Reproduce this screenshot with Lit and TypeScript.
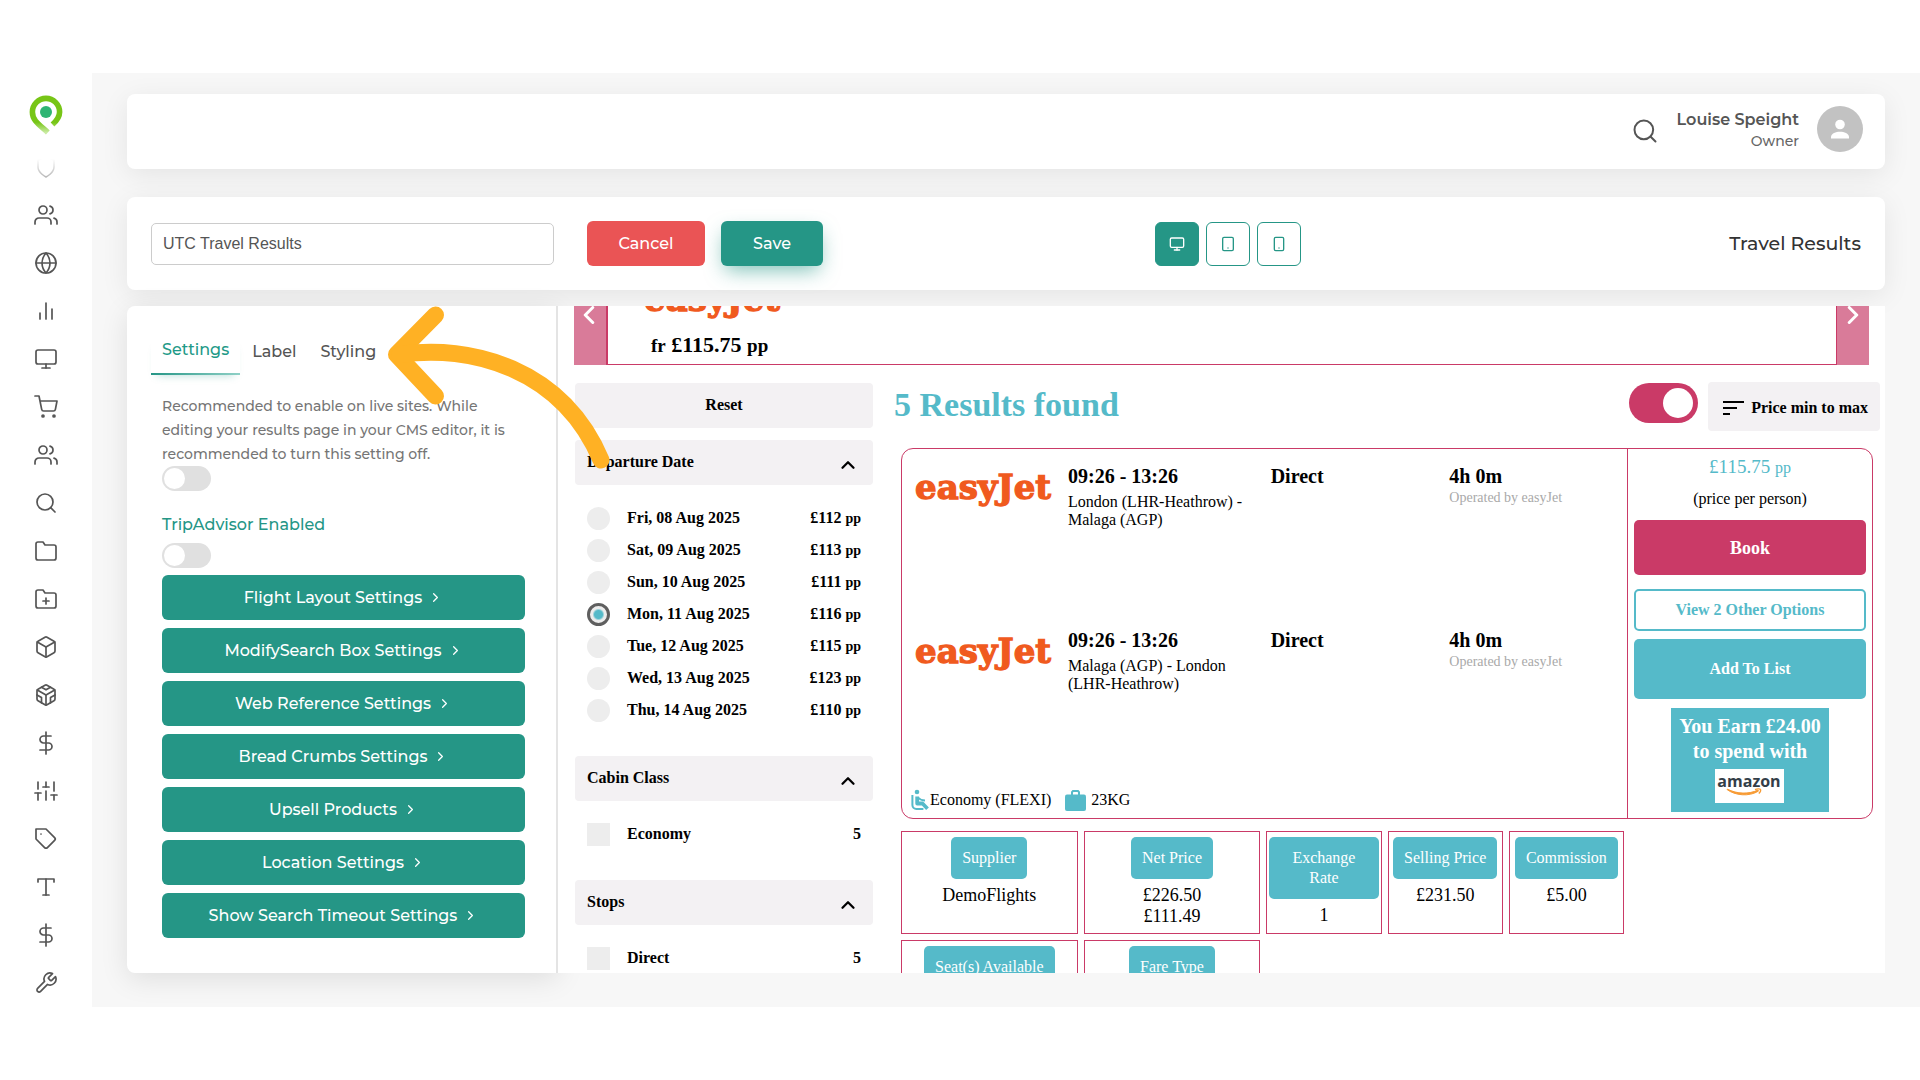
import { LitElement, html, css, svg } from "lit";
import { customElement, property, state } from "lit/decorators.js";
import { classMap } from "lit/directives/class-map.js";

/* Line icons, 24px grid, drawn with the current colour. */
const ICONS: Record<string, unknown> = {
  users: svg`<path d="M17 21v-2a4 4 0 0 0-4-4H5a4 4 0 0 0-4 4v2"/><circle cx="9" cy="7" r="4"/><path d="M23 21v-2a4 4 0 0 0-3-3.87"/><path d="M16 3.13a4 4 0 0 1 0 7.75"/>`,
  globe: svg`<circle cx="12" cy="12" r="10"/><path d="M2 12h20"/><path d="M12 2a15.3 15.3 0 0 1 4 10 15.3 15.3 0 0 1-4 10 15.3 15.3 0 0 1-4-10 15.3 15.3 0 0 1 4-10z"/>`,
  bars: svg`<path d="M18 20V10"/><path d="M12 20V4"/><path d="M6 20v-6"/>`,
  monitor: svg`<rect x="2" y="3" width="20" height="14" rx="2"/><path d="M8 21h8"/><path d="M12 17v4"/>`,
  cart: svg`<circle cx="9" cy="21" r="1"/><circle cx="20" cy="21" r="1"/><path d="M1 1h4l2.68 13.39a2 2 0 0 0 2 1.61h9.72a2 2 0 0 0 2-1.61L23 6H6"/>`,
  search: svg`<circle cx="11" cy="11" r="8"/><path d="M21 21l-4.35-4.35"/>`,
  folder: svg`<path d="M22 19a2 2 0 0 1-2 2H4a2 2 0 0 1-2-2V5a2 2 0 0 1 2-2h5l2 3h9a2 2 0 0 1 2 2z"/>`,
  folderPlus: svg`<path d="M22 19a2 2 0 0 1-2 2H4a2 2 0 0 1-2-2V5a2 2 0 0 1 2-2h5l2 3h9a2 2 0 0 1 2 2z"/><path d="M12 11v6"/><path d="M9 14h6"/>`,
  box: svg`<path d="M21 16V8a2 2 0 0 0-1-1.73l-7-4a2 2 0 0 0-2 0l-7 4A2 2 0 0 0 3 8v8a2 2 0 0 0 1 1.73l7 4a2 2 0 0 0 2 0l7-4A2 2 0 0 0 21 16z"/><path d="M3.27 6.96L12 12.01l8.73-5.05"/><path d="M12 22.08V12"/>`,
  sandbox: svg`<path d="M21 16V8a2 2 0 0 0-1-1.73l-7-4a2 2 0 0 0-2 0l-7 4A2 2 0 0 0 3 8v8a2 2 0 0 0 1 1.73l7 4a2 2 0 0 0 2 0l7-4A2 2 0 0 0 21 16z"/><path d="M7.5 4.21L12 6.81l4.5-2.6"/><path d="M7.5 19.79V14.6L3 12"/><path d="M21 12l-4.5 2.6v5.19"/><path d="M3.27 6.96L12 12.01l8.73-5.05"/><path d="M12 22.08V12"/>`,
  dollar: svg`<path d="M12 1v22"/><path d="M17 5H9.5a3.5 3.5 0 0 0 0 7h5a3.5 3.5 0 0 1 0 7H6"/>`,
  sliders: svg`<path d="M4 21v-7"/><path d="M4 10V3"/><path d="M12 21v-9"/><path d="M12 8V3"/><path d="M20 21v-5"/><path d="M20 12V3"/><path d="M1 14h6"/><path d="M9 8h6"/><path d="M17 16h6"/>`,
  tag: svg`<path d="M20.59 13.41l-7.17 7.17a2 2 0 0 1-2.83 0L2 12V2h10l8.59 8.59a2 2 0 0 1 0 2.82z"/><path d="M7 7h.01"/>`,
  type: svg`<path d="M4 7V4h16v3"/><path d="M9 20h6"/><path d="M12 4v16"/>`,
  wrench: svg`<path d="M14.7 6.3a1 1 0 0 0 0 1.4l1.6 1.6a1 1 0 0 0 1.4 0l3.77-3.77a6 6 0 0 1-7.94 7.94l-6.91 6.91a2.12 2.12 0 0 1-3-3l6.91-6.91a6 6 0 0 1 7.94-7.94l-3.76 3.76z"/>`,
  tablet: svg`<rect x="4" y="2" width="16" height="20" rx="2"/><path d="M12 18h.01"/>`,
  phone: svg`<rect x="5" y="2" width="14" height="20" rx="2"/><path d="M12 18h.01"/>`,
  left: svg`<path d="M15 18l-6-6 6-6"/>`,
  right: svg`<path d="M9 18l6-6-6-6"/>`,
  up: svg`<path d="M18 15l-6-6-6 6"/>`,
};

const icon = (name: string, size = 24, stroke = 1.5) => html`<svg
  class="icon"
  width=${size}
  height=${size}
  viewBox="0 0 24 24"
  fill="none"
  stroke="currentColor"
  stroke-width=${stroke}
  stroke-linecap="round"
  stroke-linejoin="round"
  aria-hidden="true"
>${ICONS[name]}</svg>`;

const airlineLogo = () => html`<svg class="airline" width="138" height="48" viewBox="0 0 138 48" role="img" aria-label="easyJet">
  <text x="0" y="35" font-family="'DejaVu Serif', serif" font-weight="700" font-size="34" fill="#f05a1e" stroke="#f05a1e" stroke-width="1.300">easyJet</text>
</svg>`;

const base = css`
  * { box-sizing: border-box; }
  button, input { font: inherit; color: inherit; margin: 0; }
  button { border: 0; background: none; padding: 0; cursor: pointer; }
  a { color: inherit; text-decoration: none; }
  p, h2, h3, dl, dd, dt, ul { margin: 0; padding: 0; font-weight: inherit; font-size: inherit; }
  ul { list-style: none; }
  svg { display: block; flex: none; }
`;

/* ---------- Navigation rail ---------- */

@customElement("nav-rail")
class NavRail extends LitElement {
  static styles = [base, css`
    :host {
      display: flex; flex-direction: column; align-items: center;
      width: 92px; flex: none; padding-top: 22px; background: #fff; color: #555;
      position: relative; z-index: 1; overflow: hidden;
    }
    .brand { height: 40px; margin-bottom: 20px; }
    .shield { margin-bottom: 24px; }
    .list { display: flex; flex-direction: column; gap: 24px; }
    .link { display: block; }
  `];

  private items = [
    ["users", "Customers"], ["globe", "Websites"], ["bars", "Reports"], ["monitor", "Pages"],
    ["cart", "Bookings"], ["users", "Agents"], ["search", "Search"], ["folder", "Files"],
    ["folderPlus", "New folder"], ["box", "Products"], ["sandbox", "Packages"], ["dollar", "Payments"],
    ["sliders", "Controls"], ["tag", "Offers"], ["type", "Content"], ["dollar", "Finance"], ["wrench", "Tools"],
  ];

  render() {
    return html`
      <a class="brand" href="#" aria-label="Home">
        <svg width="34" height="40" viewBox="0 0 34 40">
          <defs>
            <linearGradient id="pin" x1="0" y1="0" x2="0" y2="1">
              <stop offset="0.7" stop-color="#77c516"/><stop offset="1" stop-color="#c9eba2"/>
            </linearGradient>
          </defs>
          <path d="M23.500 29.500C28 25.500 30.600 21.500 30.600 17A13.600 13.600 0 0 0 3.400 17C3.400 25.500 10 29.500 18.800 37.500" fill="none" stroke="url(#pin)" stroke-width="5.600"/>
          <circle cx="17" cy="17" r="6" fill="#2fb573"/>
        </svg>
      </a>
      <svg class="shield" width="24" height="24" viewBox="0 0 24 24" fill="none" stroke-width="1.5">
        <defs>
          <linearGradient id="fade" x1="0" y1="0" x2="0" y2="1">
            <stop offset="0.1" stop-color="#fff"/><stop offset="1" stop-color="#b8b8b8"/>
          </linearGradient>
        </defs>
        <path stroke="url(#fade)" d="M12 22s8-4 8-10V5l-8-3-8 3v7c0 6 8 10 8 10z"/>
      </svg>
      <nav class="list">
        ${this.items.map(([name, label]) => html`<a class="link" href="#" aria-label=${label}>${icon(name, 24, 1.7)}</a>`)}
      </nav>
    `;
  }
}

/* ---------- Settings panel ---------- */

@customElement("settings-panel")
class SettingsPanel extends LitElement {
  @state() private tab = "Settings";

  static styles = [base, css`
    :host {
      display: block; width: 431px; flex: none; padding-top: 31px; background: #fff;
      border-right: 2px solid #e4e4e4; border-radius: 8px 0 0 8px;
      box-shadow: 0 6px 28px rgba(0, 0, 0, 0.1);
    }
    .tabs { display: flex; align-items: flex-start; margin-left: 24px; }
    .tab { padding: 3px 12px 11px; line-height: 24px; color: #555; font-weight: 500; }
    .tab.active {
      color: #1f9a88; padding: 1px 11px 13px;
      background: linear-gradient(90deg, #259686, #8fd0c6) bottom / 100% 2px no-repeat;
      box-shadow: 0 6px 8px -6px rgba(37, 150, 134, 0.35);
    }
    .body { padding: 19px 31px 0 35px; }
    .note { display: block; font-size: 14px; font-weight: 500; line-height: 24px; color: #757575; }
    .name { display: block; margin: 22px 0 6px; line-height: 24px; font-weight: 500; color: #259686; }
    .switch {
      appearance: none; display: block; width: 49px; height: 25px; border-radius: 13px;
      background: #e0e0e0; padding: 2px; cursor: pointer;
    }
    .switch::before { content: ""; display: block; width: 21px; height: 21px; border-radius: 50%; background: #fff; }
    .switch:checked { background: #259686; }
    .switch:checked::before { margin-left: 24px; }
    .actions { display: flex; flex-direction: column; gap: 8px; margin-top: 7px; }
    .action {
      display: flex; align-items: center; justify-content: center; gap: 6px; height: 45px;
      border-radius: 6px; background: #259686; color: #fff; font-weight: 500;
    }
  `];

  render() {
    const actions = [
      "Flight Layout Settings", "ModifySearch Box Settings", "Web Reference Settings",
      "Bread Crumbs Settings", "Upsell Products", "Location Settings", "Show Search Timeout Settings",
    ];
    return html`
      <div class="tabs" role="tablist">
        ${["Settings", "Label", "Styling"].map((t) => html`
          <button role="tab" aria-selected=${t === this.tab} class=${classMap({ tab: true, active: t === this.tab })}
            @click=${() => (this.tab = t)}>${t}</button>`)}
      </div>
      <div class="body">
        <label class="note" for="live">Recommended to enable on live sites. While editing your results page in your CMS editor, it is recommended to turn this setting off.</label>
        <input id="live" class="switch" type="checkbox" role="switch">
        <label class="name" for="trip">TripAdvisor Enabled</label>
        <input id="trip" class="switch" type="checkbox" role="switch">
        <div class="actions">
          ${actions.map((a) => html`<button class="action">${a}${icon("right", 15, 2)}</button>`)}
        </div>
      </div>
    `;
  }
}

/* ---------- Filters ---------- */

interface Option { label: string; value: string; pp?: boolean; checked?: boolean; }

@customElement("filter-group")
class FilterGroup extends LitElement {
  @property() heading = "";
  @property() kind: "radio" | "checkbox" = "checkbox";
  @property({ attribute: false }) options: Option[] = [];
  @state() private open = true;

  static styles = [base, css`
    :host { display: block; font-weight: 700; }
    .head {
      display: flex; align-items: center; justify-content: space-between; width: 100%; height: 45px;
      padding: 0 14px 0 12px; border-radius: 4px; background: #f3f1f3;
    }
    .title { padding-bottom: 1px; }
    .chevron { padding-top: 5px; }
    .rows { padding: 17px 12px 30px 12px; }
    .row { display: flex; align-items: center; height: 32px; }
    .box { appearance: none; width: 23px; height: 23px; margin-right: 17px; background: #ededed; flex: none; }
    .box[type="radio"] { border-radius: 50%; }
    .box:checked {
      border: 3px solid #5f5f5f;
      background: radial-gradient(circle, #55bac9 0 4px, #ededed 6px);
    }
    .label { flex: 1; }
    .unit { font-size: 14px; }
  `];

  render() {
    return html`
      <button class="head" aria-expanded=${this.open} @click=${() => (this.open = !this.open)}>
        <span class="title">${this.heading}</span><span class="chevron">${icon("up", 22, 2.5)}</span>
      </button>
      ${this.open ? html`<div class="rows">
        ${this.options.map((o, i) => html`
          <div class="row">
            <input class="box" id="o${i}" name="o" type=${this.kind} .checked=${!!o.checked}>
            <label class="label" for="o${i}">${o.label}</label>
            <span>${o.value}${o.pp ? html` <span class="unit">pp</span>` : ""}</span>
          </div>`)}
      </div>` : ""}
    `;
  }
}

/* ---------- Flight result ---------- */

@customElement("flight-card")
class FlightCard extends LitElement {
  static styles = [base, css`
    :host { display: block; line-height: 18px; }
    .card { display: flex; border: 1px solid #ca3a67; border-radius: 12px; }
    .trip { flex: 1; min-width: 0; display: flex; flex-direction: column; }
    .leg {
      display: grid; grid-template-columns: 136px 186fr 162fr 162fr; column-gap: 17px;
      align-items: start; min-height: 164px; padding: 15px 16px 0 13px;
    }
    .airline { overflow: visible; }
    .strong { font-size: 20px; line-height: 24px; font-weight: 700; }
    .route { margin-top: 5px; }
    .operator { margin-top: 2px; font-size: 14px; line-height: 16px; color: #a9a9a9; }
    .extras { display: flex; align-items: center; margin-top: auto; padding: 0 9px 6px; height: 30px; }
    .cabin { padding-right: 14px; }
    .bag { margin-right: 5px; }
    .side {
      width: 245px; flex: none; border-left: 1px solid #ca3a67; padding: 6px;
      display: flex; flex-direction: column; text-align: center;
    }
    .price { font-size: 19px; line-height: 24px; color: #55bac9; }
    .unit { font-size: 16px; }
    .per { margin: 10px 0 12px; }
    .book, .options, .add { border-radius: 5px; font-weight: 700; color: #fff; }
    .book { height: 55px; background: #ca3a67; font-size: 18px; }
    .options { height: 42px; margin: 14px 0 8px; border: 2px solid #55bac9; color: #55bac9; }
    .add { height: 60px; background: #55bac9; }
    .earn {
      align-self: center; margin-top: 9px; padding: 6px 8px 9px; background: #55bac9; color: #fff;
      font-size: 20px; line-height: 25px; font-weight: 700;
    }
    .amazon { margin: 5px auto 0; background: #fff; }
    .facts {
      display: grid; grid-template-columns: 23fr 23fr 15fr 15fr 15fr; gap: 6px;
      margin: 12px 249px 0 0;
    }
    .fact {
      border: 1px solid #ca3a67; min-height: 103px; padding: 5px 2px 6px;
      display: flex; flex-direction: column; align-items: center; text-align: center;
    }
    .term { padding: 11px; margin-bottom: 6px; line-height: 20px; border-radius: 5px; background: #55bac9; color: #fff; }
    .value { font-size: 18px; line-height: 21px; }
  `];

  private leg(route: string) {
    return html`<div class="leg">
      ${airlineLogo()}
      <div><p class="strong">09:26 - 13:26</p><p class="route">${route}</p></div>
      <p class="strong">Direct</p>
      <div><p class="strong">4h 0m</p><p class="operator">Operated by easyJet</p></div>
    </div>`;
  }

  render() {
    const facts: [string, string[]][] = [
      ["Supplier", ["DemoFlights"]], ["Net Price", ["£226.50", "£111.49"]], ["Exchange Rate", ["1"]],
      ["Selling Price", ["£231.50"]], ["Commission", ["£5.00"]], ["Seat(s) Available", []], ["Fare Type", []],
    ];
    return html`
      <article class="card">
        <div class="trip">
          ${this.leg("London (LHR-Heathrow) - Malaga (AGP)")}
          ${this.leg("Malaga (AGP) - London (LHR-Heathrow)")}
          <div class="extras">
            <svg width="19" height="22" viewBox="0 0 19 22" fill="none" stroke="#55bac9" stroke-linejoin="round">
              <circle cx="6" cy="3" r="2.300" fill="#55bac9" stroke="none"/>
              <path d="M6.200 7.500v7h5.300l5 5.200" stroke-width="3.800"/><path d="M7 8.600c2 2 4 2.800 7 2.800" stroke-width="2"/>
              <path d="M1.400 6v10a4 4 0 0 0 4 4h7" stroke-width="2"/>
            </svg>
            <span class="cabin">Economy (FLEXI)</span>
            <svg class="bag" width="21" height="21" viewBox="0 0 21 21">
              <path d="M7 5V2.2L8 1h5l1 1.2V5" fill="none" stroke="#55bac9" stroke-width="2"/>
              <rect y="4.5" width="21" height="16.5" rx="2" fill="#55bac9"/>
            </svg>
            <span>23KG</span>
          </div>
        </div>
        <div class="side">
          <p class="price">£115.75 <span class="unit">pp</span></p>
          <p class="per">(price per person)</p>
          <button class="book">Book</button>
          <button class="options">View 2 Other Options</button>
          <button class="add">Add To List</button>
          <div class="earn">
            You Earn £24.00<br>to spend with
            <svg class="amazon" width="69" height="34" viewBox="0 0 69 34" role="img" aria-label="amazon">
              <text x="34" y="18" text-anchor="middle" font-family="'Open Sans', sans-serif" font-size="16" font-weight="700" fill="#333e48">amazon</text>
              <path d="M12 20.500c8 6 22 7.500 31.500 1.600l-.6-1c-9 4.300-21 4-30.500-1z" fill="#f79b34" stroke="#f79b34"/>
              <path d="M40 20.600c2-1 5-1 5.500-.2.400.9-.6 3-1.700 4" fill="none" stroke="#f79b34" stroke-width="1.300"/>
            </svg>
          </div>
        </div>
      </article>
      <dl class="facts">
        ${facts.map(([term, values]) => html`<div class="fact">
          <dt class="term">${term}</dt>${values.map((v) => html`<dd class="value">${v}</dd>`)}
        </div>`)}
      </dl>
    `;
  }
}

/* ---------- Page preview ---------- */

@customElement("page-preview")
class PagePreview extends LitElement {
  static styles = [base, css`
    :host {
      display: block; flex: 1; min-width: 0; overflow: hidden; background: #fff; color: #000;
      font-family: "Liberation Serif", "Times New Roman", serif; font-size: 16px; line-height: 18px;
    }
    .carousel { display: flex; height: 101px; margin: -42px 16px 0; }
    .arrow { display: flex; align-items: center; justify-content: center; width: 32px; background: #d97b99; color: #fff; }
    .arrow.prev { padding-right: 2px; }
    .slide {
      flex: 1; border: 1px solid #ca3a67; border-left-width: 2px;
      padding: 11px 0 0 36px;
    }
    .fare { margin-left: 7px; padding-top: 9px; font-size: 22px; line-height: 24px; font-weight: 700; }
    .small { font-size: 19px; }
    .body { display: grid; grid-template-columns: 298px 1fr; gap: 21px; padding: 17px 5px 0 17px; }
    .filters { padding-top: 1px; }
    .reset { display: block; width: 100%; height: 45px; margin-bottom: 12px; padding-bottom: 2px; border-radius: 4px; background: #f3f1f3; font-weight: 700; }
    .top { display: flex; align-items: flex-start; gap: 10px; margin-bottom: 17px; }
    .count { flex: 1; font-size: 34px; line-height: 46px; font-weight: 700; color: #55bac9; }
    .toggle {
      appearance: none; width: 69px; height: 40px; padding: 5px; border-radius: 20px;
      background: #bbb; margin-top: 1px; cursor: pointer;
    }
    .toggle::before { content: ""; display: block; width: 30px; height: 30px; border-radius: 50%; background: #fff; }
    .toggle:checked { background: #ca3a67; }
    .toggle:checked::before { margin-left: 29px; }
    .sort { display: flex; align-items: center; gap: 7px; height: 49px; padding: 2px 12px 0 15px; border-radius: 4px; background: #f3f1f3; font-weight: 700; }
    .card { margin: 0 7px; }
  `];

  private dates: Option[] = [
    ["Fri, 08 Aug 2025", "£112"], ["Sat, 09 Aug 2025", "£113"], ["Sun, 10 Aug 2025", "£111"],
    ["Mon, 11 Aug 2025", "£116"], ["Tue, 12 Aug 2025", "£115"], ["Wed, 13 Aug 2025", "£123"],
    ["Thu, 14 Aug 2025", "£110"],
  ].map(([label, value], i) => ({ label, value, pp: true, checked: i === 3 }));

  render() {
    return html`
      <div class="carousel">
        <button class="arrow prev" aria-label="Previous">${icon("left", 30, 2.4)}</button>
        <div class="slide">
          ${airlineLogo()}
          <p class="fare"><span class="small">fr</span> £115.75 <span class="small">pp</span></p>
        </div>
        <button class="arrow" aria-label="Next">${icon("right", 30, 2.4)}</button>
      </div>
      <div class="body">
        <aside class="filters">
          <button class="reset">Reset</button>
          <filter-group heading="Departure Date" kind="radio" .options=${this.dates}></filter-group>
          <filter-group heading="Cabin Class" .options=${[{ label: "Economy", value: "5" }]}></filter-group>
          <filter-group heading="Stops" .options=${[{ label: "Direct", value: "5" }]}></filter-group>
        </aside>
        <section>
          <div class="top">
            <h2 class="count">5 Results found</h2>
            <input class="toggle" type="checkbox" role="switch" aria-label="Agent details" checked>
            <button class="sort">
              <svg width="21" height="14" viewBox="0 0 21 14"><path d="M0 1h21M0 7h14M0 13h7" stroke="#000" stroke-width="2"/></svg>
              Price min to max
            </button>
          </div>
          <flight-card class="card"></flight-card>
        </section>
      </div>
    `;
  }
}

/* ---------- Application ---------- */

@customElement("app-root")
class AppRoot extends LitElement {
  @state() private device = "monitor";

  static styles = [base, css`
    :host {
      display: block; position: relative; background: #fff; padding: 73px 0;
      font-family: Montserrat, Inter, sans-serif; font-size: 16px; color: #555;
      height: 100vh; box-sizing: border-box;
    }
    .frame { display: flex; height: 100%; background: #f7f7f7; overflow: hidden; }
    .content { flex: 1; min-width: 0; display: flex; flex-direction: column; padding: 21px 35px 34px; }
    .bar { background: #fff; border-radius: 8px; box-shadow: 0 6px 28px rgba(0, 0, 0, 0.08); flex: none; }
    .header { display: flex; justify-content: flex-end; gap: 18px; padding: 12px 22px 17px; margin-bottom: 28px; }
    .find { padding-top: 4px; }
    .person { text-align: right; padding-top: 3px; }
    .who { font-weight: 600; line-height: 22px; }
    .role { font-size: 14px; font-weight: 500; line-height: 20px; color: #666; }
    .tools { display: grid; grid-template-columns: 1004fr 706fr; align-items: center; padding: 24px; margin-bottom: 16px; }
    .group { display: flex; align-items: center; }
    .name {
      width: 403px; height: 42px; padding: 0 11px; border: 1px solid #ccc; border-radius: 5px; background: #fff;
      margin-right: 33px; font-family: "Liberation Sans", Arial, sans-serif;
    }
    .cancel, .save { height: 45px; border-radius: 6px; color: #fff; font-weight: 500; }
    .cancel { width: 118px; margin-right: 16px; background: #ea5455; }
    .save { width: 102px; background: #259686; box-shadow: 0 8px 20px -4px rgba(37, 150, 134, 0.6); }
    .device {
      display: flex; align-items: center; justify-content: center; width: 44px; height: 44px; margin-right: 7px;
      border: 1px solid #259686; border-radius: 6px; color: #259686;
    }
    .device.active { background: #259686; color: #fff; }
    .title { margin-left: auto; font-size: 19px; line-height: 24px; font-weight: 500; color: #333; }
    .editor { flex: 1; min-height: 0; display: flex; }
    .pointer { position: absolute; left: 380px; top: 300px; pointer-events: none; }
  `];

  render() {
    return html`
      <div class="frame">
        <nav-rail></nav-rail>
        <main class="content">
          <header class="bar header">
            <button class="find" aria-label="Search">${icon("search", 28, 1.7)}</button>
            <div class="person"><p class="who">Louise Speight</p><p class="role">Owner</p></div>
            <svg width="46" height="46" viewBox="0 0 46 46" role="img" aria-label="Profile">
              <circle cx="23" cy="23" r="23" fill="#c2c2c2"/>
              <circle cx="23" cy="18.500" r="4.800" fill="#fff"/>
              <path d="M14 32.500v-1.500c0-3.500 5-5.200 9-5.200s9 1.700 9 5.200v1.500z" fill="#fff"/>
            </svg>
          </header>
          <div class="bar tools">
            <div class="group">
              <input class="name" type="text" aria-label="Page name" value="UTC Travel Results">
              <button class="cancel">Cancel</button>
              <button class="save">Save</button>
            </div>
            <div class="group">
              ${["monitor", "tablet", "phone"].map((d) => html`
                <button aria-label=${d} class=${classMap({ device: true, active: d === this.device })}
                  @click=${() => (this.device = d)}>${icon(d, 16, 2)}</button>`)}
              <h2 class="title">Travel Results</h2>
            </div>
          </div>
          <div class="editor">
            <settings-panel></settings-panel>
            <page-preview></page-preview>
          </div>
        </main>
      </div>
      <svg class="pointer" width="240" height="180" viewBox="380 300 240 180" fill="none" stroke="#ffb124" stroke-width="17" stroke-linecap="round" stroke-linejoin="round" aria-hidden="true">
        <path d="M435.500 315L396.500 354.500L435.500 396"/>
        <path d="M400 354.500C470 344 562 368 601 460"/>
      </svg>
    `;
  }
}
